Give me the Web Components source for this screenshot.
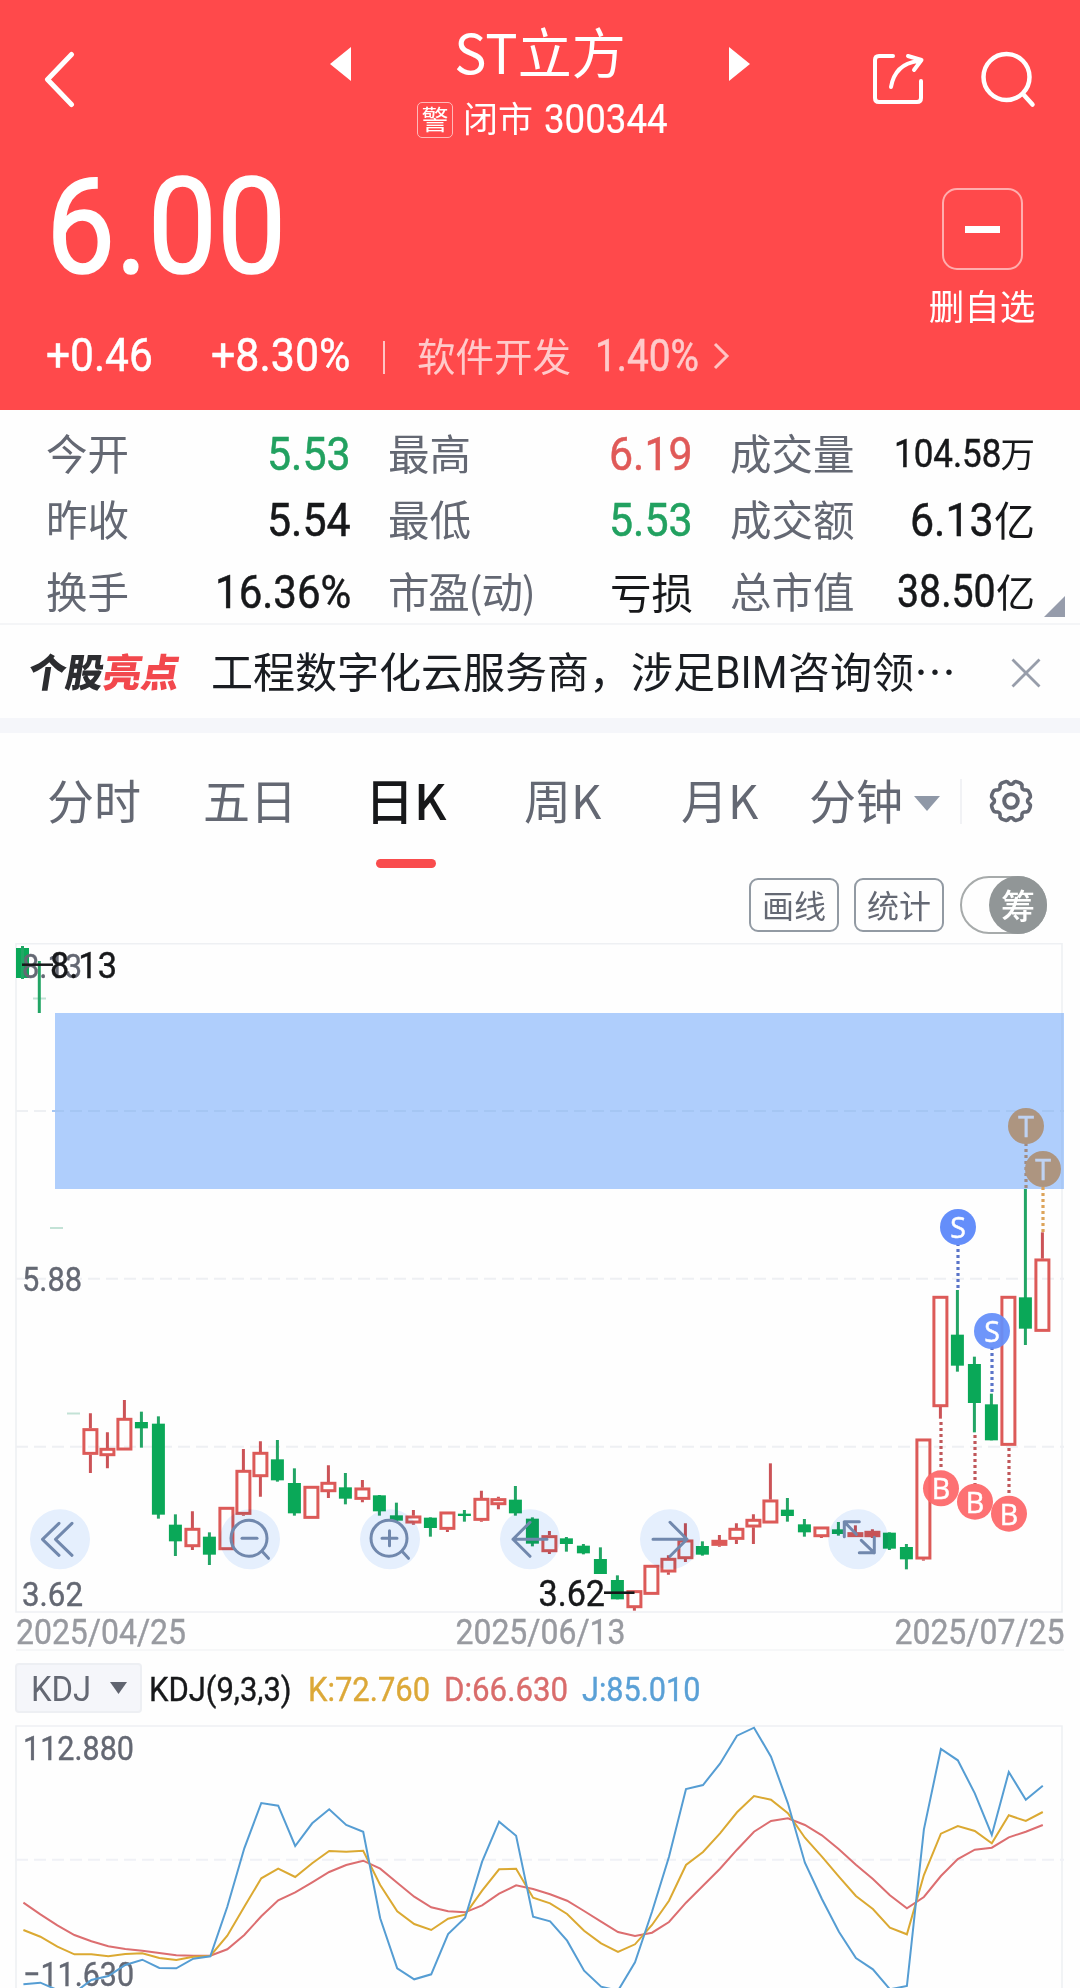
<!DOCTYPE html>
<html lang="zh-CN">
<head>
<meta charset="utf-8">
<title>ST立方 300344</title>
<style>
  body {
    margin: 0;
    width: 1080px;
    height: 1988px;
    overflow: hidden;
    background: #fefefe;
    color: #17181a;
    font-family: "Noto Sans CJK SC", sans-serif;
  }
</style>
</head>
<body>
<stock-page></stock-page>

<script>
const define = (name, html, setup) => {
  const template = document.createElement('template');
  template.innerHTML = html;
  customElements.define(name, class extends HTMLElement {
    constructor() {
      super();
      this.attachShadow({ mode: 'open' });
      this.shadowRoot.appendChild(template.content.cloneNode(true));
    }
    connectedCallback() {
      if (setup) setup(this, this.shadowRoot);
    }
  });
};

// narrow figures: the text is squeezed to the width given in "w"
define('fit-text', `
  <style>
    :host { display: inline-block; flex: none; white-space: nowrap; font-family: Roboto, "Noto Sans CJK SC", sans-serif; line-height: 1.2; -webkit-text-stroke: .5px currentColor; }
    span { display: inline-block; transform-origin: 0 50%; }
  </style>
  <span><slot></slot></span>
`, (el, root) => {
  const span = root.querySelector('span');
  const w = +el.getAttribute('w');
  el.style.fontSize = el.getAttribute('size') + 'px';
  span.style.transform = 'none';
  el.style.width = 'auto';
  const real = span.offsetWidth;
  el.style.width = w + 'px';
  if (real) span.style.transform = `scaleX(${w / real})`;
});

define('stock-header', `
  <style>
    :host { display: block; height: 410px; background: #ff494b; color: #fff; overflow: hidden; }
    svg { display: block; flex: none; fill: none; stroke: #fff; }
    nav { display: flex; align-items: flex-start; height: 146px; padding-left: 43px; }
    .back { margin-top: 50px; }
    .tri { margin-top: 47px; fill: #fff; stroke: none; }
    .prev { margin-left: 255px; }
    .title { width: 378px; text-align: center; }
    h1 { margin: 16px 0 0; font-size: 54px; line-height: 70px; font-weight: 400; }
    .sub { display: flex; justify-content: center; align-items: center; height: 40px; margin-top: 13px; padding-left: 5px; font-size: 35px; line-height: 38px; }
    .warn { box-sizing: border-box; width: 36px; height: 36px; margin: 1px 10px 0 0; border: 1.5px solid #ffb9b9; border-radius: 5px; font-size: 27px; line-height: 31px; text-align: center; }
    .state { margin-top: -4px; }
    .sub fit-text { margin-left: 11px; -webkit-text-stroke: .2px; }
    .share { margin: 50px 0 0 121px; }
    .search { margin: 48px 0 0 52px; }
    .quote { display: flex; justify-content: space-between; height: 185px; padding: 0 46px 0 46px; }
    .price { line-height: 164px; -webkit-text-stroke: 1.6px; }
    .remove { display: flex; flex-direction: column; align-items: center; width: 104px; margin-top: 42px; font-size: 35.500px; line-height: 50px; white-space: nowrap; }
    .box { box-sizing: border-box; display: flex; align-items: center; justify-content: center; width: 81px; height: 82px; margin-bottom: 10px; border: 2px solid #ffadad; border-radius: 15px; }
    .box i { width: 35px; height: 7px; background: #fff; }
    .change { display: flex; align-items: center; height: 50px; margin-top: 0; padding-left: 46px; font-size: 38.5px; line-height: 50px; }
    .sep { width: 2px; height: 33px; margin: 2px 32px 0 33px; background: #ffc4c4; }
    .sector { display: flex; align-items: center; margin-top: -4px; color: #ffcaca; }
    .sector fit-text { margin: 4px 0 0 24px; }
  </style>
  <nav>
    <svg class="back" width="32" height="60"><path d="M28.5 4.500L4.500 29.500L28.500 54.500" stroke-width="5" stroke-linecap="round" stroke-linejoin="round"/></svg>
    <svg class="tri prev" width="21" height="34"><path d="M21 0V34L0 17Z"/></svg>
    <div class="title">
      <h1>ST立方</h1>
      <div class="sub"><span class="warn">警</span><span class="state">闭市</span><fit-text w="124" size="40.5">300344</fit-text></div>
    </div>
    <svg class="tri" width="21" height="34"><path d="M0 0V34L21 17Z"/></svg>
    <svg class="share" width="56" height="58" stroke-width="4" stroke-linecap="round">
      <path d="M22 6H8Q4 6 4 10V48Q4 52 8 52H46Q50 52 50 48V31" />
      <path d="M20 37Q24 14 47 11M37 6L50.500 10L43 20" stroke-linejoin="round"/>
    </svg>
    <svg class="search" width="60" height="64" stroke-width="4.500" stroke-linecap="round"><circle cx="27.500" cy="29" r="23"/><path d="M44 46L53.500 56.500"/></svg>
  </nav>
  <div class="quote">
    <fit-text class="price" w="240" size="134">6.00</fit-text>
    <div class="remove"><div class="box"><i></i></div>删自选</div>
  </div>
  <div class="change">
    <fit-text w="107" size="46">+0.46</fit-text>
    <fit-text w="139" size="46" style="margin-left:58px">+8.30%</fit-text>
    <span class="sep"></span>
    <span class="sector">软件开发<fit-text w="104" size="44">1.40%</fit-text>
      <svg width="18" height="30" style="margin:4px 0 0 14px;stroke:#ffc4c4"><path d="M2 3L14 15L2 27" stroke-width="3"/></svg></span>
  </div>
`);

define('stat-cell', `
  <style>
    :host { display: flex; align-items: center; justify-content: space-between; height: 66px; font-size: 41.500px; line-height: 60px; }
    .label { margin-top: -3px; color: #646873; white-space: nowrap; }
    :host([tight]) .label { letter-spacing: -1.2px; }
    .value { display: flex; align-items: center; white-space: nowrap; }
    :host([tone="up"]) .value { color: #e05a58; }
    :host([tone="down"]) .value { color: #22a160; }
    ::slotted(fit-text) { margin-top: 2px; }
    ::slotted(b) { margin-top: -2px; font-weight: 400; }
  </style>
  <span class="label"></span><span class="value"><slot></slot></span>
`, (el, root) => {
  root.querySelector('.label').textContent = el.getAttribute('label');
});

define('stock-stats', `
  <style>
    :host { display: block; box-sizing: border-box; height: 215px; padding: 10px 0 0 46px; border-bottom: 2px solid #f4f5f7; }
    .row { display: grid; grid-template-columns: 305px 305px 305px; column-gap: 37px; height: 66px; }
    .last { display: flex; margin-top: 6px; }
    svg { display: block; margin: 38px 0 0 9px; }
    b { font-weight: 400; }
  </style>
  <div class="row">
    <stat-cell label="今开" tone="down"><fit-text w="84" size="47">5.53</fit-text></stat-cell>
    <stat-cell label="最高" tone="up"><fit-text w="84" size="47">6.19</fit-text></stat-cell>
    <stat-cell label="成交量"><fit-text w="107" size="39.500">104.58</fit-text><b style="font-size:34.500px">万</b></stat-cell>
  </div>
  <div class="row">
    <stat-cell label="昨收"><fit-text w="84" size="47">5.54</fit-text></stat-cell>
    <stat-cell label="最低" tone="down"><fit-text w="84" size="47">5.53</fit-text></stat-cell>
    <stat-cell label="成交额"><fit-text w="84" size="47">6.13</fit-text><b style="font-size:41px">亿</b></stat-cell>
  </div>
  <div class="last">
    <div class="row">
      <stat-cell label="换手"><fit-text w="136" size="47">16.36%</fit-text></stat-cell>
      <stat-cell label="市盈(动)" tight>亏损</stat-cell>
      <stat-cell label="总市值"><fit-text w="99" size="46">38.50</fit-text><b style="font-size:39px">亿</b></stat-cell>
    </div>
    <svg width="21" height="21"><path d="M21 0V21H0Z" fill="#969cab"/></svg>
  </div>
`);

define('highlight-bar', `
  <style>
    :host { display: flex; align-items: center; height: 93px; border-bottom: 15px solid #f5f6fa; }
    .logo { display: flex; width: 156px; margin-left: 29px; height: 60px; line-height: 56px; transform: skewX(-9deg); font-weight: 900; }
    .logo fit-text { font-family: "Noto Sans CJK SC", sans-serif; line-height: 56px; -webkit-text-stroke: 0; }
    .red { color: #f2484d; }
    p { margin: 0 0 3px 26px; width: 745px; font-size: 42px; line-height: 60px; white-space: nowrap; color: #1a1d22; }
    p fit-text { -webkit-text-stroke: 0; }
    svg { display: block; margin: 2px 0 0 55px; }
  </style>
  <div class="logo"><fit-text w="75" size="39" style="color:#2c2d30">个股</fit-text><fit-text class="red" w="76" size="39">亮点</fit-text></div>
  <p>工程数字化云服务商，涉足<fit-text w="73" size="45">BIM</fit-text>咨询领…</p>
  <svg width="30" height="30"><path d="M1.500 1.500L28.500 28.500M28.500 1.500L1.500 28.500" stroke="#979daa" stroke-width="2.800"/></svg>
`);

define('period-tabs', `
  <style>
    :host { display: flex; align-items: flex-start; height: 143px; padding-left: 47px; color: #646873; font-size: 47px; line-height: 70px; }
    .tab { display: flex; flex-direction: column; align-items: flex-start; width: 157px; margin-top: 31px; white-space: nowrap; }
    .tab.on { color: #17181a; font-weight: 500; font-size: 49px; }
    .tab.on i { width: 60px; height: 9px; margin: 25px 0 0 11px; border-radius: 5px; background: #f94c4d; }
    .more { display: flex; align-items: center; margin-top: 31px; }
    svg { display: block; flex: none; }
    .line { width: 2px; height: 45px; margin: 46px 26px 0 20px; background: #f1f2f5; }
  </style>
  <span class="tab" style="width:156px">分时</span>
  <span class="tab">五日</span>
  <span class="tab on" style="margin-left:5px;width:159px"><span>日K</span><i></i></span>
  <span class="tab">周K</span>
  <span class="tab" style="width:128px">月K</span>
  <span class="more">分钟<svg width="26" height="16" style="margin:10px 0 0 11px"><path d="M0 0H26L13 15Z" fill="#8f98a7"/></svg></span>
  <span class="line"></span>
  <svg width="46" height="46" style="margin-top:45px" fill="none" stroke="#646873" stroke-width="3.600" stroke-linejoin="round"><path id="gear"/><circle cx="23" cy="23" r="6.800" stroke-width="4"/></svg>
`, (el, root) => {
  // eight rounded lobes round the hub
  let d = '';
  for (let a = 0; a < 360; a += 4) {
    const t = a * Math.PI / 180;
    const r = 18.2 + 1.9 * Math.tanh(2.2 * Math.cos(8 * t + Math.PI) + 1);
    d += (a ? 'L' : 'M') + (23 + r * Math.cos(t)).toFixed(1) + ' ' + (23 + r * Math.sin(t)).toFixed(1);
  }
  root.getElementById('gear').setAttribute('d', d + 'Z');
});

define('chart-tools', `
  <style>
    :host { box-sizing: border-box; display: flex; justify-content: flex-end; height: 67px; padding: 0 33px 0 0; color: #646873; }
    .btn { box-sizing: border-box; width: 90px; height: 54px; margin: 2px 15px 0 0; border: 2px solid #929aa3; border-radius: 9px; font-size: 32px; line-height: 48px; text-align: center; white-space: nowrap; }
    .switch { box-sizing: border-box; display: flex; justify-content: flex-end; width: 87px; height: 58px; border: 2px solid #a7abab; border-radius: 29px; margin-left: 1px; }
    .knob { width: 58px; height: 58px; margin: -2px; border-radius: 50%; background: #919697; color: #fff; font-size: 34px; line-height: 57px; text-align: center; font-weight: 500; }
  </style>
  <span class="btn">画线</span><span class="btn">统计</span>
  <span class="switch"><span class="knob">筹</span></span>
`);

const STEP = 17;
const GREEN = '#0aa858', RED = '#dc5a58';
const label = (x, y, w, size, fill, text) =>
  `<text x="${x}" y="${y}" font-size="${size}" fill="${fill}" stroke="${fill}" stroke-width=".4" textLength="${w}" lengthAdjust="spacingAndGlyphs">${text}</text>`;

// type, high, body top, body bottom, low; in thirds of a pixel below y=1370
const candles = [
  ['r',130,175,254,309],['r',187,234,258,295],['r',90,144,241,241],['g',125,156,175,233],
  ['g',139,161,434,446],['g',433,464,514,558],['r',424,474,531,540],['g',487,500,554,585],
  ['r',411,411,540,540],['r',237,300,434,437],['r',214,246,321,380],['g',210,268,331,335],
  ['g',295,339,430,437],['r',348,348,446,446],['r',286,336,366,384],['g',309,352,386,403],
  ['r',330,353,389,397],['g',375,376,424,437],['g',398,436,452,455],['r',420,437,460,464],
  ['g',442,443,474,500],['r',425,425,479,486],['g',420,431,438,455],['r',362,384,452,455],
  ['r',380,385,405,418],['g',348,389,430,437],['g',442,446,521,529],['r',483,496,546,552],
  ['g',501,505,522,545],['g',522,527,550,553],['g',532,567,612,612],['g',616,630,688,688],
  ['r',661,661,714,722],['r',585,585,674,674],['r',556,564,607,614],['r',460,509,567,576],
  ['g',514,528,554,557],['f',495,510,527,530],['r',460,474,509,522],['r',433,447,472,522],
  ['r',280,389,460,460],['g',384,419,438,455],['g',447,463,487,500],['r',470,470,501,504],
  ['g',456,478,492,497],['f',466,487,500,500],['f',478,483,501,504],['g',487,488,536,540],
  ['g',522,531,568,598],['r',206,206,568,572],['r',-222,-222,111,146],['g',-240,-106,-13,5],
  ['g',-40,-18,99,187],['g',71,103,211,211],['r',-222,-222,227,227],['g',-543,-218,-124,-75],
  ['r',-413,-334,-115,-115]
];

const drawCandle = ([type, h, t, b, l], i) => {
  const x = 90.4 + STEP * i;
  const [hy, ty, by, ly] = [h, t, b, l].map(v => 1370 + v / 3);
  if (type === 'g') {
    return `<path d="M${x} ${hy}V${ly}" stroke="#22a565" stroke-width="3"/><rect x="${x - 6.5}" y="${ty}" width="13" height="${by - ty}" fill="${GREEN}"/>`;
  }
  const fill = type === 'f' ? '#ea4a4c' : 'none';
  return `<path d="M${x} ${hy}V${ty}M${x} ${by}V${ly}" stroke="#cb5357" stroke-width="3"/>` +
    `<rect x="${x - 6.5}" y="${ty + 1.3}" width="13" height="${Math.max(by - ty - 2.6, 2)}" fill="${fill}" stroke="${RED}" stroke-width="3"/>`;
};

const mark = (x, y, letter, fill, ink, y1, y2, dots) =>
  `<path d="M${x} ${y1}V${y2}" stroke="${dots}" stroke-width="3.2" stroke-dasharray="3 3"/>` +
  `<circle cx="${x}" cy="${y}" r="18" fill="${fill}"/>` +
  `<text x="${x}" y="${y + 11}" font-size="28.500" text-anchor="middle" fill="${ink}" stroke="${ink}" stroke-width=".5" style="font-family:'Open Sans',sans-serif">${letter}</text>`;

const tool = (x, icon) =>
  `<g transform="translate(${x} 1539.300)"><circle class="pad" r="30" fill="#e6f0fe"/><g fill="none" stroke="#7188ad" stroke-width="3" stroke-linecap="round" stroke-linejoin="round">${icon}</g></g>`;

define('kline-chart', `
  <style>
    :host { display: block; height: 709px; }
    svg { display: block; font-family: Roboto, sans-serif; }
    .pad { mix-blend-mode: multiply; }
  </style>
  <svg width="1080" height="709" viewBox="0 943 1080 709"></svg>
`, (el, root) => {
  const lens = '<circle cx="-1" cy="-1" r="18"/><path d="M12 12L18.500 19"/>';
  root.querySelector('svg').innerHTML = `
    <g fill="none" stroke="#eef0f3" stroke-width="1.600">
      <path d="M16 943.800H1062V1612H16Z"/>
      <path d="M16 1650H1064" stroke="#f3f4f6"/>
      <path d="M16 1278.700H1064M16 1446.700H1064M16 1111H1064" stroke-dasharray="12 6" stroke-width="2"/>
    </g>
    <path d="M33 998.500H46M50 1228H63M67 1413.500H80" stroke="#c3e2d6" stroke-width="2"/>
    <rect x="16" y="948" width="13" height="30" fill="${GREEN}"/>
    <path d="M22.500 946V979M39.300 961V1013" stroke="#22a565" stroke-width="3"/>
    ${label(22, 978, 60, 34, '#646873', '8.13')}
    ${label(22, 1291, 60, 34, '#646873', '5.88')}
    ${label(22, 1605.500, 61, 34, '#646873', '3.62')}
    ${candles.map(drawCandle).join('')}
    <rect x="55" y="1013" width="1009" height="176" fill="#afcefc"/>
    <path d="M52 1111H1064" stroke="#a5c6f3" stroke-width="2" stroke-dasharray="12 6"/>
    <path d="M1062 1013V1189" stroke="#a8c7f3" stroke-width="1.600"/>
    <path d="M22 964.700H53" stroke="#17181a" stroke-width="2.500"/>
    ${label(50, 978, 67, 36, '#17181a', '8.13')}
    <path d="M604 1592.700H634.500" stroke="#17181a" stroke-width="2.600"/>
    ${label(538.5, 1606, 66.500, 36, '#17181a', '3.62')}
    ${mark(1026, 1126, 'T', '#ad9580', '#bfd2f2', 1143, 1189, '#a08b83')}
    ${mark(1043, 1169, 'T', '#ad9580', '#bfd2f2', 1187, 1232, '#dda45a')}
    ${mark(958, 1227, 'S', '#648efa', '#fff', 1243, 1288, '#5a74c8')}
    ${mark(992, 1331, 'S', '#648efaee', '#fff', 1347, 1393, '#5a74c8')}
    ${mark(941, 1488.3, 'B', '#fd6769ee', '#fff', 1422, 1470, '#c0575a')}
    ${mark(975, 1501.7, 'B', '#fd6769ee', '#fff', 1435, 1484, '#c0575a')}
    ${mark(1009, 1513.7, 'B', '#fd6769ee', '#fff', 1448, 1496, '#c0575a')}
    ${tool(60, '<path d="M-1 -16L-17.500 0L-1 16M12 -16L-4.500 0L12 16"/>')}
    ${tool(250, lens + '<path d="M-8 -1H7"/>')}
    ${tool(390, lens + '<path d="M-8 -1H7M-0.500 -8.500V6.500"/>')}
    ${tool(530, '<path d="M0 -17L-17 0L0 17M-17 0H17"/>')}
    ${tool(670, '<path d="M0 -17L17 0L0 17M17 0H-17"/>')}
    ${tool(858.3, '<path d="M-14 -2.500V-17.500H1M-14 -17.500L-2 -5M16 -2V13.500H1M16 13.500L3 1"/>')}
    ${label(16, 1644, 170, 35, '#989aa0', '2025/04/25')}
    ${label(455.5, 1644, 170, 35, '#989aa0', '2025/06/13')}
    ${label(894.5, 1644, 170, 35, '#989aa0', '2025/07/25')}
  `;
});

define('kdj-bar', `
  <style>
    :host { display: flex; align-items: center; height: 73px; padding-left: 15px; }
    .select { box-sizing: border-box; display: flex; align-items: center; width: 127px; height: 50px; margin: 0 7px 1px 0; padding-left: 14px; border: 2px solid #edeff3; border-radius: 4px; background: #f5f6fa; color: #646873; }
    svg { margin-left: 19px; }
    fit-text { margin: 2px 14px 0 0; -webkit-text-stroke: .4px; }
    .select fit-text { margin-right: 0; margin-top: 4px; -webkit-text-stroke: 0; }
  </style>
  <span class="select"><fit-text w="60" size="35">KDJ</fit-text><svg width="17" height="12"><path d="M0 0H17L8.500 12Z" fill="#60646f"/></svg></span>
  <fit-text w="143" size="34">KDJ(9,3,3)</fit-text>
  <fit-text w="122" size="34" style="color:#dca838;margin-left:2px">K:72.760</fit-text>
  <fit-text w="124" size="34" style="color:#d96c6b">D:66.630</fit-text>
  <fit-text w="119" size="34" style="color:#5aa0d6">J:85.010</fit-text>
`);

// line heights in thirds of a pixel below y=1650
const lines = {
  '#dc6e70': [758,793,826,855,874,889,897,902,909,916,917,917,898,855,799,751,727,697,666,645,632,656,698,740,772,784,787,766,731,706,717,733,752,783,815,846,858,848,816,758,707,656,599,545,513,505,525,556,598,644,687,736,775,741,678,627,599,593,562,545,525],
  '#dba932': [840,860,890,913,913,919,912,910,924,930,920,918,857,770,685,656,681,640,603,605,602,705,784,822,840,806,794,722,658,656,743,760,792,842,880,906,883,825,752,645,606,550,487,438,449,490,563,620,680,738,777,833,853,675,551,528,543,580,496,513,486],
  '#559dd3': [1003,998,1020,1028,990,978,945,929,954,955,926,919,770,595,459,467,588,520,478,525,545,805,955,988,973,852,803,635,515,557,800,814,872,962,1010,1022,937,785,620,417,405,341,257,233,320,460,638,747,845,924,958,1018,1008,538,297,331,430,555,366,449,407]
};

define('kdj-chart', `
  <style>
    :host { display: block; height: 263px; overflow: hidden; }
    svg { display: block; font-family: Roboto, sans-serif; }
  </style>
  <svg width="1080" height="263" viewBox="0 1725 1080 263"></svg>
`, (el, root) => {
  const paths = Object.entries(lines).map(([color, ys]) =>
    `<polyline fill="none" stroke="${color}" stroke-width="2" points="${ys.map((v, i) => `${(23.4 + 16.99 * i).toFixed(1)},${(1650 + v / 3).toFixed(1)}`).join(' ')}"/>`);
  root.querySelector('svg').innerHTML = `
    <path d="M16 2000V1726H1062V2000" fill="none" stroke="#eef0f3" stroke-width="1.600"/>
    <path d="M16 1859.700H1064" stroke="#f0f1f6" stroke-width="2" stroke-dasharray="12 6"/>
    ${label(23, 1759.500, 111, 34, '#646873', '112.880')}
    ${label(23, 1985.500, 111, 34, '#646873', '−11.630')}
    ${paths.join('')}
  `;
});

define('stock-page', `
  <style>:host { display: flex; flex-direction: column; width: 1080px; height: 1988px; overflow: hidden; }</style>
  <stock-header></stock-header>
  <stock-stats></stock-stats>
  <highlight-bar></highlight-bar>
  <period-tabs></period-tabs>
  <chart-tools></chart-tools>
  <kline-chart></kline-chart>
  <kdj-bar></kdj-bar>
  <kdj-chart></kdj-chart>
`);
</script>
</body>
</html>
